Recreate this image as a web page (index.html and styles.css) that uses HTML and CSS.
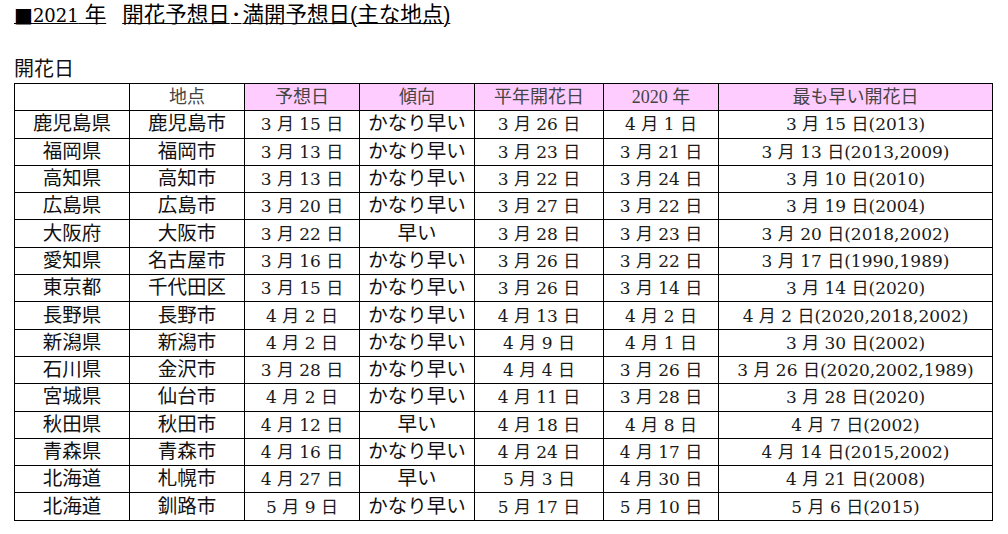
FILE: index.html
```html
<!DOCTYPE html>
<html lang="ja">
<head>
<meta charset="utf-8">
<title>2021年 開花予想日・満開予想日</title>
<link rel="stylesheet" href="styles.css">
</head>
<body>
<div class="page">
  <h1 class="title"><span class="sq">■</span><span class="dig">2021</span> 年<span class="gap"></span>開花予想日<span class="dot">･</span>満開予想日(主な地点)</h1>
  <h2 class="subtitle">開花日</h2>
  <table class="sakura">
    <colgroup>
      <col class="c1"><col class="c2"><col class="c3"><col class="c4"><col class="c5"><col class="c6"><col class="c7">
    </colgroup>
    <thead>
      <tr>
        <th></th>
        <th>地点</th>
        <th class="pink">予想日</th>
        <th class="pink">傾向</th>
        <th class="pink">平年開花日</th>
        <th class="pink">2020 年</th>
        <th class="pink">最も早い開花日</th>
      </tr>
    </thead>
    <tbody>
      <tr><td>鹿児島県</td><td>鹿児島市</td><td class="num">3 月 15 日</td><td>かなり早い</td><td class="num">3 月 26 日</td><td class="num">4 月 1 日</td><td class="num">3 月 15 日(2013)</td></tr>
      <tr><td>福岡県</td><td>福岡市</td><td class="num">3 月 13 日</td><td>かなり早い</td><td class="num">3 月 23 日</td><td class="num">3 月 21 日</td><td class="num">3 月 13 日(2013,2009)</td></tr>
      <tr><td>高知県</td><td>高知市</td><td class="num">3 月 13 日</td><td>かなり早い</td><td class="num">3 月 22 日</td><td class="num">3 月 24 日</td><td class="num">3 月 10 日(2010)</td></tr>
      <tr><td>広島県</td><td>広島市</td><td class="num">3 月 20 日</td><td>かなり早い</td><td class="num">3 月 27 日</td><td class="num">3 月 22 日</td><td class="num">3 月 19 日(2004)</td></tr>
      <tr><td>大阪府</td><td>大阪市</td><td class="num">3 月 22 日</td><td>早い</td><td class="num">3 月 28 日</td><td class="num">3 月 23 日</td><td class="num">3 月 20 日(2018,2002)</td></tr>
      <tr><td>愛知県</td><td>名古屋市</td><td class="num">3 月 16 日</td><td>かなり早い</td><td class="num">3 月 26 日</td><td class="num">3 月 22 日</td><td class="num">3 月 17 日(1990,1989)</td></tr>
      <tr><td>東京都</td><td>千代田区</td><td class="num">3 月 15 日</td><td>かなり早い</td><td class="num">3 月 26 日</td><td class="num">3 月 14 日</td><td class="num">3 月 14 日(2020)</td></tr>
      <tr><td>長野県</td><td>長野市</td><td class="num">4 月 2 日</td><td>かなり早い</td><td class="num">4 月 13 日</td><td class="num">4 月 2 日</td><td class="num">4 月 2 日(2020,2018,2002)</td></tr>
      <tr><td>新潟県</td><td>新潟市</td><td class="num">4 月 2 日</td><td>かなり早い</td><td class="num">4 月 9 日</td><td class="num">4 月 1 日</td><td class="num">3 月 30 日(2002)</td></tr>
      <tr><td>石川県</td><td>金沢市</td><td class="num">3 月 28 日</td><td>かなり早い</td><td class="num">4 月 4 日</td><td class="num">3 月 26 日</td><td class="num">3 月 26 日(2020,2002,1989)</td></tr>
      <tr><td>宮城県</td><td>仙台市</td><td class="num">4 月 2 日</td><td>かなり早い</td><td class="num">4 月 11 日</td><td class="num">3 月 28 日</td><td class="num">3 月 28 日(2020)</td></tr>
      <tr><td>秋田県</td><td>秋田市</td><td class="num">4 月 12 日</td><td>早い</td><td class="num">4 月 18 日</td><td class="num">4 月 8 日</td><td class="num">4 月 7 日(2002)</td></tr>
      <tr><td>青森県</td><td>青森市</td><td class="num">4 月 16 日</td><td>かなり早い</td><td class="num">4 月 24 日</td><td class="num">4 月 17 日</td><td class="num">4 月 14 日(2015,2002)</td></tr>
      <tr><td>北海道</td><td>札幌市</td><td class="num">4 月 27 日</td><td>早い</td><td class="num">5 月 3 日</td><td class="num">4 月 30 日</td><td class="num">4 月 21 日(2008)</td></tr>
      <tr><td>北海道</td><td>釧路市</td><td class="num">5 月 9 日</td><td>かなり早い</td><td class="num">5 月 17 日</td><td class="num">5 月 10 日</td><td class="num">5 月 6 日(2015)</td></tr>
    </tbody>
  </table>
</div>
</body>
</html>
```

FILE: styles.css
```css
html, body {
  margin: 0;
  padding: 0;
  background: #ffffff;
}

body {
  font-family: "Liberation Serif", "Noto Sans CJK JP", serif;
  color: #111111;
}

.page {
  padding: 2px 14px 0 14px;
}

.title {
  display: block;
  margin: 0;
  font-family: "Liberation Sans", "Noto Sans CJK JP", sans-serif;
  font-size: 21.5px;
  line-height: 26px;
  font-weight: 400;
  text-decoration: underline;
  text-underline-offset: 1px;
  text-decoration-thickness: 1px;
  color: #000;
  white-space: nowrap;
}

.title .sq {
  font-family: "DejaVu Sans", sans-serif;
  font-size: 20px;
}

.title .dig {
  font-family: "DejaVu Serif", serif;
  font-size: 18px;
}

.title .gap {
  display: inline-block;
  width: 16px;
}

.title .dot {
  padding: 0 1px;
}

.subtitle {
  margin: 25px 0 0 0;
  font-family: "Noto Sans CJK JP", sans-serif;
  font-size: 20px;
  line-height: 28px;
  font-weight: 400;
  color: #111;
}

.sakura {
  margin-top: 1px;
  border-collapse: collapse;
  table-layout: fixed;
  width: 979px;
}

.c1, .c2, .c3, .c4, .c6 { width: 115px; }
.c5 { width: 129px; }
.c7 { width: 274px; }

.sakura th,
.sakura td {
  border: 1px solid #000;
  height: 26.3px;
  padding: 0;
  text-align: center;
  vertical-align: middle;
  white-space: nowrap;
  line-height: 20px;
}

.sakura th {
  font-size: 18px;
  font-weight: 400;
  color: #444;
}

.sakura td {
  font-size: 19.5px;
  color: #111;
}

.sakura td.num {
  font-family: "DejaVu Serif", "Noto Sans CJK JP", serif;
  font-size: 17px;
  color: #1a1a1a;
}

.sakura th.pink {
  background: #ffccff;
}
```
